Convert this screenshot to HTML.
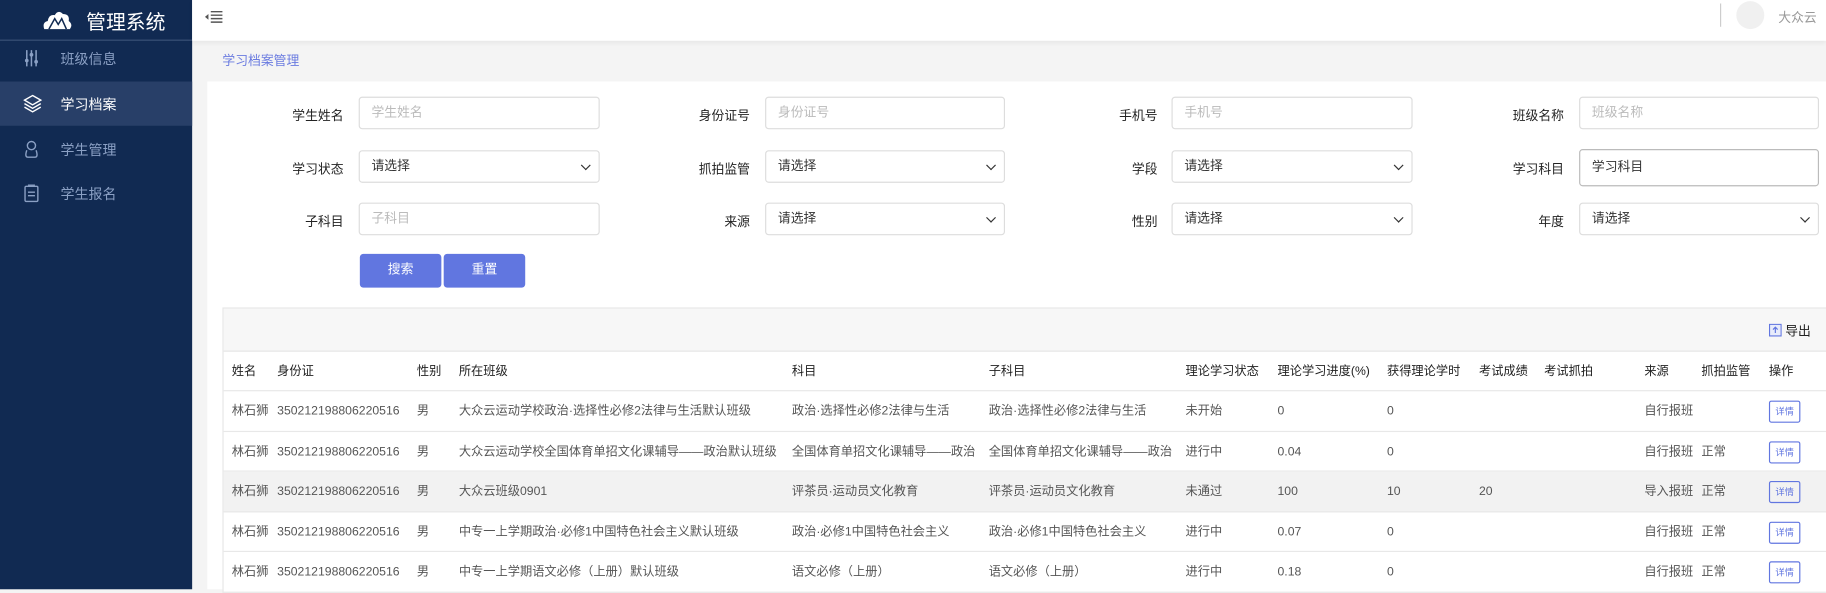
<!DOCTYPE html>
<html><head><meta charset="utf-8"><style>
*{margin:0;padding:0;box-sizing:border-box}
html,body{width:1826px;height:589px;overflow:hidden;background:#f4f4f4}
#w{position:absolute;left:0;top:0;width:1568px;height:506px;transform:scale(1.16454);transform-origin:0 0;font-family:"Liberation Sans","Noto Sans CJK SC",sans-serif;font-size:11px;color:#333}
.side{position:absolute;left:0;top:0;width:165px;height:506px;background:#112a52}
.logo{height:35px;border-bottom:1px solid #3b5278;color:#fff;font-size:17px;display:flex;align-items:center;padding-left:36px}
.mi{position:absolute;left:0;width:165px;height:38px;color:#8ba0c4;font-size:12px;display:flex;align-items:center}
.mi span{position:absolute;left:52px}
.mi i{position:absolute;left:20px;top:11px}
.mi.on{background:#283f68;color:#fff}
.hdr{position:absolute;left:165px;top:0;right:0;height:35px;background:#fff;box-shadow:0 2px 4px rgba(0,0,0,.06)}
.bc{position:absolute;left:191px;top:44px;color:#6a7be0;font-size:11px}
.card{position:absolute;left:178px;top:70px;right:0;bottom:0;background:#fff}
.lb{position:absolute;width:100px;text-align:right;font-size:11px;color:#222}
.in{position:absolute;height:28px;border:1px solid #ddd;border-radius:3px;padding-left:10px;line-height:26px;color:#bbb;font-size:11px;background:#fff}
.in.s{color:#333}
.in.s:after{content:"";position:absolute;right:8px;top:9px;width:5px;height:5px;border-right:1.5px solid #333;border-bottom:1.5px solid #333;transform:rotate(45deg)}
.btn{position:absolute;top:218px;width:70px;height:29px;background:#6176e0;color:#fff;border-radius:3px;text-align:center;line-height:29px;font-size:11px}
.tb{position:absolute;left:191px;top:264px;width:1628px;border:1px solid #e6e6e6;background:#fff}
.tool{height:37px;background:#f7f7f7;border-bottom:1px solid #e6e6e6;position:relative}
.row{height:34.5px;border-bottom:1px solid #e8e8e8;position:relative;color:#555;font-size:10.5px}
.row.h{color:#222}
.row.g{background:#f2f2f2}
.row span{position:absolute;top:10px;line-height:14px;white-space:nowrap}
.dt{position:absolute;left:1327px;top:8px;width:27px;height:19px;border:1px solid #6176e0;border-radius:2px;color:#6176e0;font-size:8px;text-align:center;line-height:17px}
</style></head><body><div id="w">
<div class="side">
<div class="logo"><svg width="26" height="18" viewBox="0 0 26 18" style="margin-right:12px"><path d="M2 17 Q0 11 5 10 Q6 4 11 5 Q14 0 18 4 Q24 4 23 10 Q27 13 24 17Z" fill="#fff"/><path d="M6 17 L11 8 L14 13 L17 8 L21 17" stroke="#112a52" stroke-width="1.3" fill="none"/></svg>管理系统</div>
<div class="mi" style="top:31px"><i><svg width="14" height="16"><path d="M3 1v14M7 1v14M11 1v14" stroke="#8ba0c4" stroke-width="1.3"/><circle cx="3" cy="10" r="1.6" fill="#8ba0c4"/><circle cx="7" cy="5" r="1.6" fill="#8ba0c4"/><circle cx="11" cy="11" r="1.6" fill="#8ba0c4"/></svg></i><span>班级信息</span></div>
<div class="mi on" style="top:70px"><i><svg width="16" height="16"><path d="M8 1L15 5L8 9L1 5Z M1 8L8 12L15 8 M1 11L8 15L15 11" stroke="#fff" stroke-width="1.2" fill="none"/></svg></i><span>学习档案</span></div>
<div class="mi" style="top:109px"><i><svg width="14" height="16"><circle cx="7" cy="5" r="3.5" stroke="#8ba0c4" fill="none" stroke-width="1.2"/><path d="M3 9Q1 15 4 15H10Q13 15 11 9" stroke="#8ba0c4" fill="none" stroke-width="1.2"/></svg></i><span>学生管理</span></div>
<div class="mi" style="top:147px"><i><svg width="14" height="16"><rect x="1.5" y="2" width="11" height="13" rx="1" stroke="#8ba0c4" fill="none" stroke-width="1.2"/><path d="M4 1h6M4 7h6M4 10h6" stroke="#8ba0c4" stroke-width="1.2"/></svg></i><span>学生报名</span></div>
</div>
<div class="hdr">
<svg width="16" height="14" style="position:absolute;left:11px;top:7px"><path d="M5 3h10M5 6h10M5 9h10M5 12h10" stroke="#555" stroke-width="1.2"/><path d="M3 5L0 7.5L3 10Z" fill="#555"/></svg>
<div style="position:absolute;left:1312px;top:3px;width:1px;height:20px;background:#ccc"></div>
<div style="position:absolute;left:1326px;top:1px;width:24px;height:24px;border-radius:50%;background:#f0f0f0"></div>
<div style="position:absolute;left:1362px;top:7px;color:#999;font-size:11px">大众云</div>
</div>
<div class="bc">学习档案管理</div>
<div class="card"></div>

<div class="lb" style="left:195px;top:91px">学生姓名</div><div class="in" style="left:308px;top:83px;width:207px">学生姓名</div>
<div class="lb" style="left:544px;top:91px">身份证号</div><div class="in" style="left:657px;top:83px;width:206px">身份证号</div>
<div class="lb" style="left:894px;top:91px">手机号</div><div class="in" style="left:1006px;top:83px;width:207px">手机号</div>
<div class="lb" style="left:1243px;top:91px">班级名称</div><div class="in" style="left:1356px;top:83px;width:206px">班级名称</div>

<div class="lb" style="left:195px;top:137px">学习状态</div><div class="in s" style="left:308px;top:129px;width:207px">请选择</div>
<div class="lb" style="left:544px;top:137px">抓拍监管</div><div class="in s" style="left:657px;top:129px;width:206px">请选择</div>
<div class="lb" style="left:894px;top:137px">学段</div><div class="in s" style="left:1006px;top:129px;width:207px">请选择</div>
<div class="lb" style="left:1243px;top:137px">学习科目</div><div class="in" style="left:1356px;top:128px;width:206px;height:32px;line-height:30px;color:#333;border-color:#bbb">学习科目</div>

<div class="lb" style="left:195px;top:182px">子科目</div><div class="in" style="left:308px;top:174px;width:207px">子科目</div>
<div class="lb" style="left:544px;top:182px">来源</div><div class="in s" style="left:657px;top:174px;width:206px">请选择</div>
<div class="lb" style="left:894px;top:182px">性别</div><div class="in s" style="left:1006px;top:174px;width:207px">请选择</div>
<div class="lb" style="left:1243px;top:182px">年度</div><div class="in s" style="left:1356px;top:174px;width:206px">请选择</div>

<div class="btn" style="left:309px">搜索</div><div class="btn" style="left:381px">重置</div>

<div class="tb">
<div class="tool"><svg width="11" height="11" style="position:absolute;left:1327px;top:13px"><rect x=".5" y=".5" width="10" height="10" stroke="#6176e0" fill="#e8ecfb"/><path d="M5.5 8V3M3.5 5L5.5 3L7.5 5" stroke="#6176e0" fill="none"/></svg><span style="position:absolute;left:1341px;top:11px;color:#222">导出</span></div>
<div class="row h" style="height:34px"><span style="left:7px">姓名</span><span style="left:46px">身份证</span><span style="left:166px">性别</span><span style="left:202px">所在班级</span><span style="left:488px">科目</span><span style="left:657px">子科目</span><span style="left:826px">理论学习状态</span><span style="left:905px">理论学习进度(%)</span><span style="left:999px">获得理论学时</span><span style="left:1078px">考试成绩</span><span style="left:1134px">考试抓拍</span><span style="left:1220px">来源</span><span style="left:1269px">抓拍监管</span><span style="left:1327px">操作</span></div>
<div class="row"><span style="left:7px">林石狮</span><span style="left:46px">350212198806220516</span><span style="left:166px">男</span><span style="left:202px">大众云运动学校政治·选择性必修2法律与生活默认班级</span><span style="left:488px">政治·选择性必修2法律与生活</span><span style="left:657px">政治·选择性必修2法律与生活</span><span style="left:826px">未开始</span><span style="left:905px">0</span><span style="left:999px">0</span><span style="left:1220px">自行报班</span><div class="dt">详情</div></div>
<div class="row"><span style="left:7px">林石狮</span><span style="left:46px">350212198806220516</span><span style="left:166px">男</span><span style="left:202px">大众云运动学校全国体育单招文化课辅导——政治默认班级</span><span style="left:488px">全国体育单招文化课辅导——政治</span><span style="left:657px">全国体育单招文化课辅导——政治</span><span style="left:826px">进行中</span><span style="left:905px">0.04</span><span style="left:999px">0</span><span style="left:1220px">自行报班</span><span style="left:1269px">正常</span><div class="dt">详情</div></div>
<div class="row g"><span style="left:7px">林石狮</span><span style="left:46px">350212198806220516</span><span style="left:166px">男</span><span style="left:202px">大众云班级0901</span><span style="left:488px">评茶员·运动员文化教育</span><span style="left:657px">评茶员·运动员文化教育</span><span style="left:826px">未通过</span><span style="left:905px">100</span><span style="left:999px">10</span><span style="left:1078px">20</span><span style="left:1220px">导入报班</span><span style="left:1269px">正常</span><div class="dt">详情</div></div>
<div class="row"><span style="left:7px">林石狮</span><span style="left:46px">350212198806220516</span><span style="left:166px">男</span><span style="left:202px">中专一上学期政治·必修1中国特色社会主义默认班级</span><span style="left:488px">政治·必修1中国特色社会主义</span><span style="left:657px">政治·必修1中国特色社会主义</span><span style="left:826px">进行中</span><span style="left:905px">0.07</span><span style="left:999px">0</span><span style="left:1220px">自行报班</span><span style="left:1269px">正常</span><div class="dt">详情</div></div>
<div class="row"><span style="left:7px">林石狮</span><span style="left:46px">350212198806220516</span><span style="left:166px">男</span><span style="left:202px">中专一上学期语文必修（上册）默认班级</span><span style="left:488px">语文必修（上册）</span><span style="left:657px">语文必修（上册）</span><span style="left:826px">进行中</span><span style="left:905px">0.18</span><span style="left:999px">0</span><span style="left:1220px">自行报班</span><span style="left:1269px">正常</span><div class="dt">详情</div></div>
</div>
</div></body></html>
